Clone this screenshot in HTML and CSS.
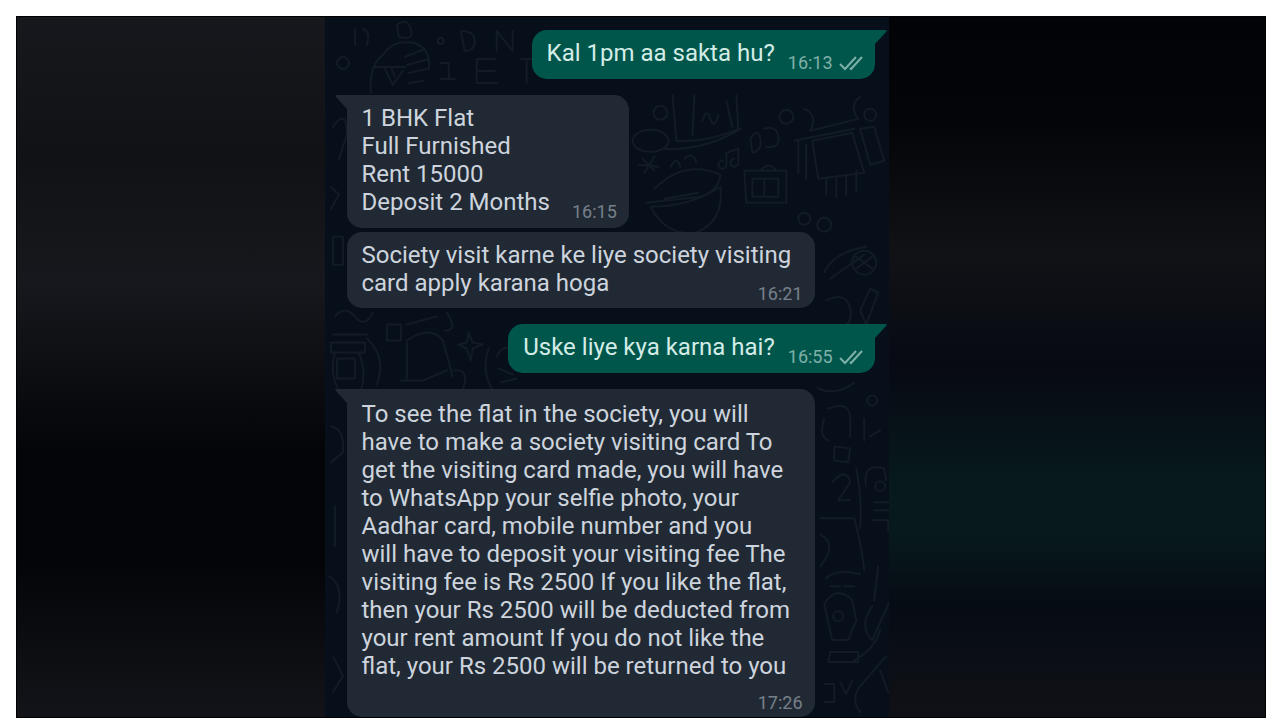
FILE: index.html
```
<!DOCTYPE html>
<html lang="en">
<head>
    <meta charset="UTF-8">
    <meta name="viewport" content="width=device-width, initial-scale=1.0">
    <title>Chat</title>
    <link rel="stylesheet" href="styles.css">
</head>
<body>
    <main class="frame">
        <section class="chat">
            <svg class="doodles" viewBox="0 0 565 701" preserveAspectRatio="xMidYMin slice" aria-hidden="true">
                <g fill="none" stroke="#121b26" stroke-width="2" stroke-linecap="round" stroke-linejoin="round">
                    <!-- top left -->
                    <path d="M30 12v16M38 12q8 2 4 16M46 76q-2-28 12-38 10-16 32-12 16 6 14 26M50 50h30M60 52l8 16 10-14M66 50l4 10M80 40l20-8M82 48l22-6M84 56l18-4M84 66l14-2M72 8q10-8 14 4t-12 8zM116 46h8v16M116 62h14M136 14q14 0 14 10t-10 10l-4-20M172 34V14l16 20V14M152 42h18M152 42v24h20M154 54h16M196 42h12M202 42v24"/>
                    <circle cx="18" cy="46" r="6"/>
                    <circle cx="116" cy="24" r="3"/>
                    <!-- top right -->
                    <path d="M348 78l4 46q30 2 62-12l-2-34M370 78l-2 40M378 104q4-14 8-2t8-4M402 84l6 26M340 132q40 2 76-20"/>
                    <path d="M318 142l12 12M330 140l-10 16M314 148l20 2M346 150q6-12 10 0M360 142q8-8 12 4"/>
                    <path d="M426 122q8-12 10 0t-8 14zM440 112q12-4 14 8t-12 10M402 148v-12l12-4v14M402 148a4 4 0 1 1-4-4M414 146a4 4 0 1 1-4-4"/>
                    <path d="M480 92q14 6 6 22l48-12q-10-14 2-22M470 124l60-12M488 124l40-8 12 40-46 6zM474 124v32M482 128v34M502 162v16M512 160v20M522 158v20M532 154v20M536 112l14-2 10 34-14 4z"/>
                    <path d="M420 154h42v32h-40zM428 162h26v18h-26zM436 154q8-10 16 0M440 162v16"/>
                    <path d="M330 172q30-30 66-14-2 16-20 22l-54 6M326 190q40 0 70-20 4 34-24 46-30 4-46-26zM340 182l34-6"/>
                    <ellipse cx="326" cy="124" rx="18" ry="11"/>
                    <circle cx="336" cy="96" r="7"/>
                    <circle cx="462" cy="100" r="7"/>
                    <circle cx="546" cy="98" r="6"/>
                    <circle cx="480" cy="202" r="6"/>
                    <circle cx="500" cy="208" r="7"/>
                    <!-- right of the second reply -->
                    <path d="M500 256q8-20 42-26M506 262l34-24M502 284q20-10 24 8t-18 24M536 294l10-22 8 4-12 32zM508 320l18-6"/>
                    <circle cx="540" cy="246" r="12"/>
                    <path d="M532 240l16 12M548 240l-16 12"/>
                    <!-- middle left -->
                    <path d="M10 300q10-12 20 0t18-4M8 318h34M6 326h34v10H6zM10 336q-6 20 4 38M12 342h18v20H12zM34 336q8 20 2 38M42 322q20 18 10 46M62 308h14v16H62zM82 308l30-8M122 296q12 18-2 18M82 324q24-16 36 0l10 36M82 326v38M76 364h22l24-10M130 354q12-2 10 12l-2 8M144 316l4 10 10 2-10 4-2 12-4-12-8-4 8-2zM164 332q-8 22 4 42M174 352l14 6M176 366l16-4M172 340q8-16 18-2"/>
                    <!-- left edge -->
                    <path d="M8 110q14-20 14 8l-8 24M6 170l8 8-8 14M8 220h10v28H8zM6 410q14 2 12 26L6 446M10 490v40M4 560q16 10 8 36M8 640l10 20-10 16"/>
                    <!-- right edge -->
                    <path d="M494 372q18 8 36-6M504 392q22-8 22 10v18M500 402q-6 18 4 22M510 430l16 2-2 14-14-2zM540 402v22M546 420l10-6M508 466q14-16 18 0l-12 18h12M532 452q6 30 4 60M542 470q-4-24 18-18l2 12M550 486h14M550 494h14M548 504h16v12M496 502h34q8 30 10 52M496 518q18 10 0 32M502 562q10-10 34-4M506 570h10M520 570h10M500 588q12-20 28-4l4 20-8 20h-16zM506 636h28v10h-30zM548 590q-14 20 0 34l18-40M556 614q-6 20-26 30M554 550l-4 34M562 640l-26 30q-10 14 0 26M500 668h10v18h-10M516 666l6 12 6-14M556 654l8 22"/>
                    <circle cx="556" cy="470" r="5"/>
                    <circle cx="514" cy="600" r="5"/>
                    <circle cx="548" cy="384" r="5"/>
                </g>
            </svg>
            <ol class="messages">
                <li class="message sent first">
                    <p class="text">Kal 1pm aa sakta hu?</p>
                    <div class="meta">
                        <time>16:13</time>
                        <svg class="ticks" viewBox="0 0 24 16" role="img" aria-label="Delivered"><path d="M1 9l5 5 11-12M11 13l1 1L23 2"/></svg>
                    </div>
                    <svg class="tail" viewBox="0 0 12 14" aria-hidden="true"><path d="M0 0h10q3 0 1 2L0 14z"/></svg>
                </li>
                <li class="message received first">
                    <p class="text">1 BHK Flat<br>Full Furnished<br>Rent 15000<br>Deposit 2 Months</p>
                    <div class="meta"><time>16:15</time></div>
                    <svg class="tail" viewBox="0 0 12 14" aria-hidden="true"><path d="M12 0H2q-3 0-1 2l11 12z"/></svg>
                </li>
                <li class="message received wide">
                    <p class="text">Society visit karne ke liye society visiting card apply karana hoga</p>
                    <div class="meta"><time>16:21</time></div>
                </li>
                <li class="message sent first">
                    <p class="text">Uske liye kya karna hai?</p>
                    <div class="meta">
                        <time>16:55</time>
                        <svg class="ticks" viewBox="0 0 24 16" role="img" aria-label="Delivered"><path d="M1 9l5 5 11-12M11 13l1 1L23 2"/></svg>
                    </div>
                    <svg class="tail" viewBox="0 0 12 14" aria-hidden="true"><path d="M0 0h10q3 0 1 2L0 14z"/></svg>
                </li>
                <li class="message received first wide long">
                    <p class="text">To see the flat in the society, you will have to make a society visiting card To get the visiting card made, you will have to WhatsApp your selfie photo, your Aadhar card, mobile number and you will have to deposit your visiting fee The visiting fee is Rs 2500 If you like the flat, then your Rs 2500 will be deducted from your rent amount If you do not like the flat, your Rs 2500 will be returned to you</p>
                    <div class="meta"><time>17:26</time></div>
                    <svg class="tail" viewBox="0 0 12 14" aria-hidden="true"><path d="M12 0H2q-3 0-1 2l11 12z"/></svg>
                </li>
            </ol>
        </section>
    </main>
</body>
</html>
```
FILE: styles.css
```
* {
    box-sizing: border-box;
}
body {
    margin: 0;
    padding: 16px 14px 2px 16px;
    min-height: 100vh;
    display: flex;
    background: #fff;
    font-family: Roboto, "Liberation Sans", sans-serif;
}

/* dark backdrop behind the chat */
.frame {
    flex: 1;
    display: grid;
    grid-template-columns: 308fr 565fr 377fr;
    border: 1px solid #000;
    background:
        linear-gradient(#16181d, #101216 20%, #16181d 38%, #040509 62%, #040509 78%, #131419) left / 50% 100% no-repeat,
        linear-gradient(#020306, #040509 15%, #111216 34%, #070a13 50%, #07191b 66%, #07191b 74%, #060c14 84%, #101116) right / 50% 100% no-repeat;
}
.chat {
    grid-column: 2;
    position: relative;
    padding: 13px 14px 0 22px;
    background: #07101a;
}
.doodles {
    position: absolute;
    top: 0;
    left: 0;
    width: 100%;
    height: 100%;
}

.messages {
    position: relative;
    display: flex;
    flex-direction: column;
    gap: 4px;
    margin: 0;
    padding: 0;
    list-style: none;
}
.message {
    position: relative;
    display: flex;
    padding: 9px 12px 12px 15px;
    border-radius: 15px;
}
.message.first + .message.first,
.message.wide + .message.sent {
    margin-top: 12px;
}
.text {
    margin: 0;
    font-size: 24px;
    line-height: 28px;
}
.meta {
    display: flex;
    align-items: center;
    align-self: flex-end;
    gap: 6px;
    margin: 0 0 -6px auto;
    font-size: 18px;
    line-height: 20px;
}
.tail {
    position: absolute;
    top: 0;
    width: 12px;
    height: 14px;
}
.ticks {
    width: 24px;
    height: 16px;
    fill: none;
    stroke: #7fb0a8;
    stroke-width: 2;
}

.sent {
    align-self: flex-end;
    gap: 13px;
    background: #01564c;
    color: #d3ece6;
}
.sent .meta {
    color: #7fb0a8;
}
.sent.first {
    border-top-right-radius: 0;
}
.sent .tail {
    left: 100%;
    fill: #01564c;
}

.received {
    align-self: flex-start;
    gap: 22px;
    background: #212a34;
    color: #cdd4dd;
}
.received .meta {
    color: #77808a;
}
.received.first {
    border-top-left-radius: 0;
}
.received .tail {
    right: 100%;
    fill: #212a34;
}

/* time sits below the text instead of beside it */
.wide {
    flex-direction: column;
    gap: 0;
    width: 468px;
    max-width: 100%;
    padding-bottom: 4px;
}
.wide .meta {
    margin: -14px 0 0 auto;
}
.wide:not(.long) .text {
    padding-bottom: 1px;
}
.long {
    padding-top: 11px;
}
.long .text {
    padding-right: 11px;
}
.long .meta {
    margin-top: 13px;
}
```
